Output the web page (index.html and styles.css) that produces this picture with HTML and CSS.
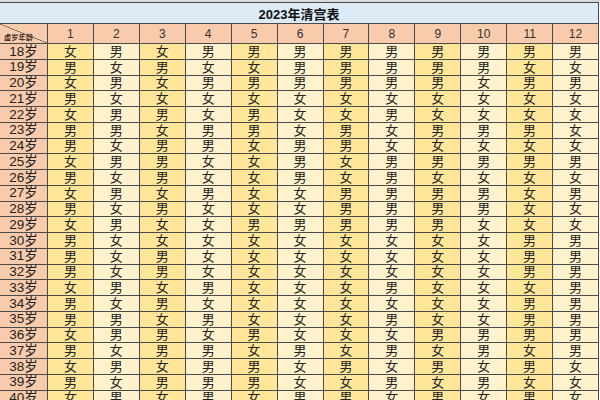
FILE: index.html
```html
<!DOCTYPE html>
<html lang="zh-CN">
<head>
<meta charset="utf-8">
<title>2023年清宫表</title>
<link rel="stylesheet" href="styles.css">
</head>
<body>
<div class="topbar"></div>
<div class="sheet">
  <div class="title">2023年清宫表</div>
  <div class="row head">
    <div class="corner"><span>虚岁年龄</span></div>
    <div>1</div><div>2</div><div>3</div><div>4</div><div>5</div><div>6</div><div>7</div><div>8</div><div>9</div><div>10</div><div>11</div><div>12</div>
  </div>
  <div class="row"><div>18岁</div><div>女</div><div>男</div><div>女</div><div>男</div><div>男</div><div>男</div><div>男</div><div>男</div><div>男</div><div>男</div><div>男</div><div>男</div></div>
  <div class="row"><div>19岁</div><div>男</div><div>女</div><div>男</div><div>女</div><div>女</div><div>男</div><div>男</div><div>男</div><div>男</div><div>男</div><div>女</div><div>女</div></div>
  <div class="row"><div>20岁</div><div>女</div><div>男</div><div>女</div><div>男</div><div>男</div><div>男</div><div>男</div><div>男</div><div>男</div><div>女</div><div>男</div><div>男</div></div>
  <div class="row"><div>21岁</div><div>男</div><div>女</div><div>女</div><div>女</div><div>女</div><div>女</div><div>女</div><div>女</div><div>女</div><div>女</div><div>女</div><div>女</div></div>
  <div class="row"><div>22岁</div><div>女</div><div>男</div><div>男</div><div>女</div><div>男</div><div>女</div><div>女</div><div>男</div><div>女</div><div>女</div><div>女</div><div>女</div></div>
  <div class="row"><div>23岁</div><div>男</div><div>男</div><div>女</div><div>男</div><div>男</div><div>女</div><div>男</div><div>女</div><div>男</div><div>男</div><div>男</div><div>女</div></div>
  <div class="row"><div>24岁</div><div>男</div><div>女</div><div>男</div><div>男</div><div>女</div><div>男</div><div>男</div><div>女</div><div>女</div><div>女</div><div>女</div><div>女</div></div>
  <div class="row"><div>25岁</div><div>女</div><div>男</div><div>男</div><div>女</div><div>女</div><div>男</div><div>女</div><div>男</div><div>男</div><div>男</div><div>男</div><div>男</div></div>
  <div class="row"><div>26岁</div><div>男</div><div>女</div><div>男</div><div>女</div><div>女</div><div>男</div><div>女</div><div>男</div><div>女</div><div>女</div><div>女</div><div>女</div></div>
  <div class="row"><div>27岁</div><div>女</div><div>男</div><div>女</div><div>男</div><div>女</div><div>女</div><div>男</div><div>男</div><div>男</div><div>男</div><div>女</div><div>男</div></div>
  <div class="row"><div>28岁</div><div>男</div><div>女</div><div>男</div><div>女</div><div>女</div><div>女</div><div>男</div><div>男</div><div>男</div><div>男</div><div>女</div><div>女</div></div>
  <div class="row"><div>29岁</div><div>女</div><div>男</div><div>女</div><div>女</div><div>男</div><div>男</div><div>男</div><div>男</div><div>男</div><div>女</div><div>女</div><div>女</div></div>
  <div class="row"><div>30岁</div><div>男</div><div>女</div><div>女</div><div>女</div><div>女</div><div>女</div><div>女</div><div>女</div><div>女</div><div>女</div><div>男</div><div>男</div></div>
  <div class="row"><div>31岁</div><div>男</div><div>女</div><div>男</div><div>女</div><div>女</div><div>女</div><div>女</div><div>女</div><div>女</div><div>女</div><div>男</div><div>男</div></div>
  <div class="row"><div>32岁</div><div>男</div><div>女</div><div>男</div><div>女</div><div>女</div><div>女</div><div>女</div><div>女</div><div>女</div><div>女</div><div>男</div><div>男</div></div>
  <div class="row"><div>33岁</div><div>女</div><div>男</div><div>女</div><div>男</div><div>女</div><div>女</div><div>女</div><div>男</div><div>女</div><div>女</div><div>女</div><div>男</div></div>
  <div class="row"><div>34岁</div><div>男</div><div>女</div><div>男</div><div>女</div><div>女</div><div>女</div><div>女</div><div>女</div><div>女</div><div>女</div><div>男</div><div>男</div></div>
  <div class="row"><div>35岁</div><div>男</div><div>男</div><div>女</div><div>男</div><div>女</div><div>女</div><div>女</div><div>男</div><div>女</div><div>女</div><div>男</div><div>男</div></div>
  <div class="row"><div>36岁</div><div>女</div><div>男</div><div>男</div><div>女</div><div>男</div><div>女</div><div>女</div><div>女</div><div>男</div><div>男</div><div>男</div><div>男</div></div>
  <div class="row"><div>37岁</div><div>男</div><div>女</div><div>男</div><div>男</div><div>女</div><div>男</div><div>女</div><div>男</div><div>女</div><div>男</div><div>女</div><div>男</div></div>
  <div class="row"><div>38岁</div><div>女</div><div>男</div><div>女</div><div>男</div><div>男</div><div>女</div><div>男</div><div>女</div><div>男</div><div>女</div><div>男</div><div>女</div></div>
  <div class="row"><div>39岁</div><div>男</div><div>女</div><div>男</div><div>男</div><div>男</div><div>女</div><div>女</div><div>男</div><div>女</div><div>男</div><div>女</div><div>女</div></div>
  <div class="row"><div>40岁</div><div>女</div><div>男</div><div>女</div><div>男</div><div>女</div><div>男</div><div>男</div><div>女</div><div>男</div><div>女</div><div>男</div><div>女</div></div>
</div>
</body>
</html>
```

FILE: styles.css
```css
html, body {
  margin: 0;
  padding: 0;
  background: #ffffff;
}
body {
  font-family: "Liberation Sans", "Noto Sans CJK SC", sans-serif;
  color: #222;
  overflow: hidden;
}
.topbar {
  height: 2px;
  background: #d9d9d9;
}
.sheet {
  width: 598px;
  padding: 1px 1px 0 0;
  background: #4a4a4a;
  display: flex;
  flex-direction: column;
  gap: 1px;
}
.title {
  height: 20px;
  background: #ddebf7;
  display: flex;
  align-items: center;
  justify-content: center;
  font-weight: bold;
  font-size: 13px;
  color: #111;
}
.row {
  display: grid;
  grid-template-columns: 47px repeat(12, 1fr);
  gap: 1px;
  height: 14.75px;
}
.row > div {
  display: flex;
  align-items: center;
  justify-content: center;
  font-size: 13px;
  line-height: 1;
  background: #fff2cc;
}
.row > div:nth-child(even) {
  background: #ffe699;
}
.row > div:first-child {
  background: #f8cbad;
  font-size: 13.5px;
}
.row.head {
  height: 19px;
}
.row.head > div {
  background: #f8cbad;
  font-size: 12px;
  color: #333;
}
.row.head > .corner {
  position: relative;
  background: #f8cbad linear-gradient(to top right, transparent calc(50% - 0.6px), #444 50%, transparent calc(50% + 0.6px));
  justify-content: flex-start;
  align-items: flex-end;
}
.corner span {
  font-size: 7px;
  font-family: "Noto Sans CJK SC", sans-serif;
  font-weight: bold;
  color: #3a2a20;
  padding: 0 0 2px 4px;
  letter-spacing: 0.3px;
}
```
